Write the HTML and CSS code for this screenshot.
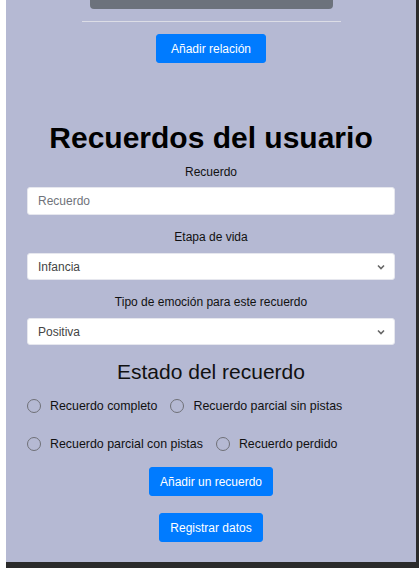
FILE: index.html
```html
<!DOCTYPE html>
<html lang="es">
<head>
<meta charset="utf-8">
<link rel="stylesheet" href="styles.css">
</head>
<body>
<div class="frame">
  <main class="panel">
    <div class="topbar"></div>
    <hr class="sep">
    <div class="center"><button class="btn rel">Añadir relación</button></div>
    <h1 class="title">Recuerdos del usuario</h1>
    <label class="lbl">Recuerdo</label>
    <input class="field" type="text" placeholder="Recuerdo">
    <label class="lbl lbl2">Etapa de vida</label>
    <div class="select"><span>Infancia</span><svg width="8" height="6" viewBox="0 0 8 6"><path d="M1 1.5 L4 4.5 L7 1.5" fill="none" stroke="#666" stroke-width="1.6"/></svg></div>
    <label class="lbl lbl2">Tipo de emoción para este recuerdo</label>
    <div class="select"><span>Positiva</span><svg width="8" height="6" viewBox="0 0 8 6"><path d="M1 1.5 L4 4.5 L7 1.5" fill="none" stroke="#666" stroke-width="1.6"/></svg></div>
    <h2 class="sub">Estado del recuerdo</h2>
    <div class="radios">
      <div class="row">
        <span class="opt"><span class="dot"></span>Recuerdo completo</span>
        <span class="opt"><span class="dot"></span>Recuerdo parcial sin pistas</span>
      </div>
      <div class="row">
        <span class="opt"><span class="dot"></span>Recuerdo parcial con pistas</span>
        <span class="opt"><span class="dot"></span>Recuerdo perdido</span>
      </div>
    </div>
    <div class="center"><button class="btn add">Añadir un recuerdo</button></div>
    <div class="center"><button class="btn reg">Registrar datos</button></div>
  </main>
  <div class="rightbar"></div>
</div>
</body>
</html>
```

FILE: styles.css
```css
html, body {
  margin: 0;
  padding: 0;
  background: #ffffff;
}
body {
  font-family: "Liberation Sans", Arial, sans-serif;
  width: 420px;
  height: 568px;
  overflow: hidden;
}
.frame {
  display: flex;
  height: 568px;
  padding-left: 6px;
  box-sizing: border-box;
}
.panel {
  width: 410px;
  height: 568px;
  background: #b5b9d3;
  border-bottom: 6px solid #2b2b2b;
  padding: 0 21px;
  box-sizing: border-box;
  display: flex;
  flex-direction: column;
  color: #111;
}
.rightbar {
  width: 3px;
  height: 568px;
  background: #2b2b2b;
}
.topbar {
  margin: 0 62px 0 63px;
  height: 9px;
  background: #6c727c;
  border-radius: 0 0 4px 4px;
}
.sep {
  margin: 12px 54px 0 55px;
  border: 0;
  border-top: 1px solid #dcdde6;
  height: 0;
}
.center {
  display: flex;
  justify-content: center;
}
.btn {
  background: #007bff;
  color: #fff;
  border: 1px solid #007bff;
  border-radius: 3px;
  font-family: "Liberation Sans", Arial, sans-serif;
  font-size: 12px;
  height: 29px;
  padding: 0 14px;
}
.rel { margin-top: 12px; }
.title {
  margin: 57px 0 0;
  text-align: center;
  font-size: 30px;
  line-height: 36px;
  font-weight: bold;
  color: #000;
}
.lbl {
  display: block;
  text-align: center;
  font-size: 12px;
  line-height: 14px;
  margin-top: 9px;
  margin-bottom: 8px;
}
.lbl2 { margin-top: 15px; margin-bottom: 9px; }
.field, .select {
  display: flex;
  align-items: center;
  width: 100%;
  height: 28px;
  box-sizing: border-box;
  background: #fff;
  border: 1px solid #e6e7ee;
  border-radius: 3px;
  padding: 0 10px;
  font-family: "Liberation Sans", Arial, sans-serif;
  font-size: 12px;
  color: #555;
  outline: none;
}
.field::placeholder { color: #6f737a; }
.select { height: 27px; justify-content: space-between; padding-right: 9px; }
.select span { color: #444; }
.sub {
  margin: 15px 0 0;
  text-align: center;
  font-size: 21px;
  line-height: 24px;
  font-weight: normal;
  color: #111;
}
.radios {
  display: flex;
  flex-direction: column;
  gap: 22px;
  margin-top: 14px;
}
.row {
  display: flex;
  gap: 13px;
  font-size: 12.4px;
  line-height: 16px;
}
.opt {
  display: flex;
  align-items: center;
  gap: 9px;
}
.dot {
  width: 14px;
  height: 14px;
  box-sizing: border-box;
  border: 1.6px solid #6f7077;
  border-radius: 50%;
  display: inline-block;
}
.add { margin-top: 15px; padding: 0 10px; }
.reg { margin-top: 17px; padding: 0 10px; }
```
